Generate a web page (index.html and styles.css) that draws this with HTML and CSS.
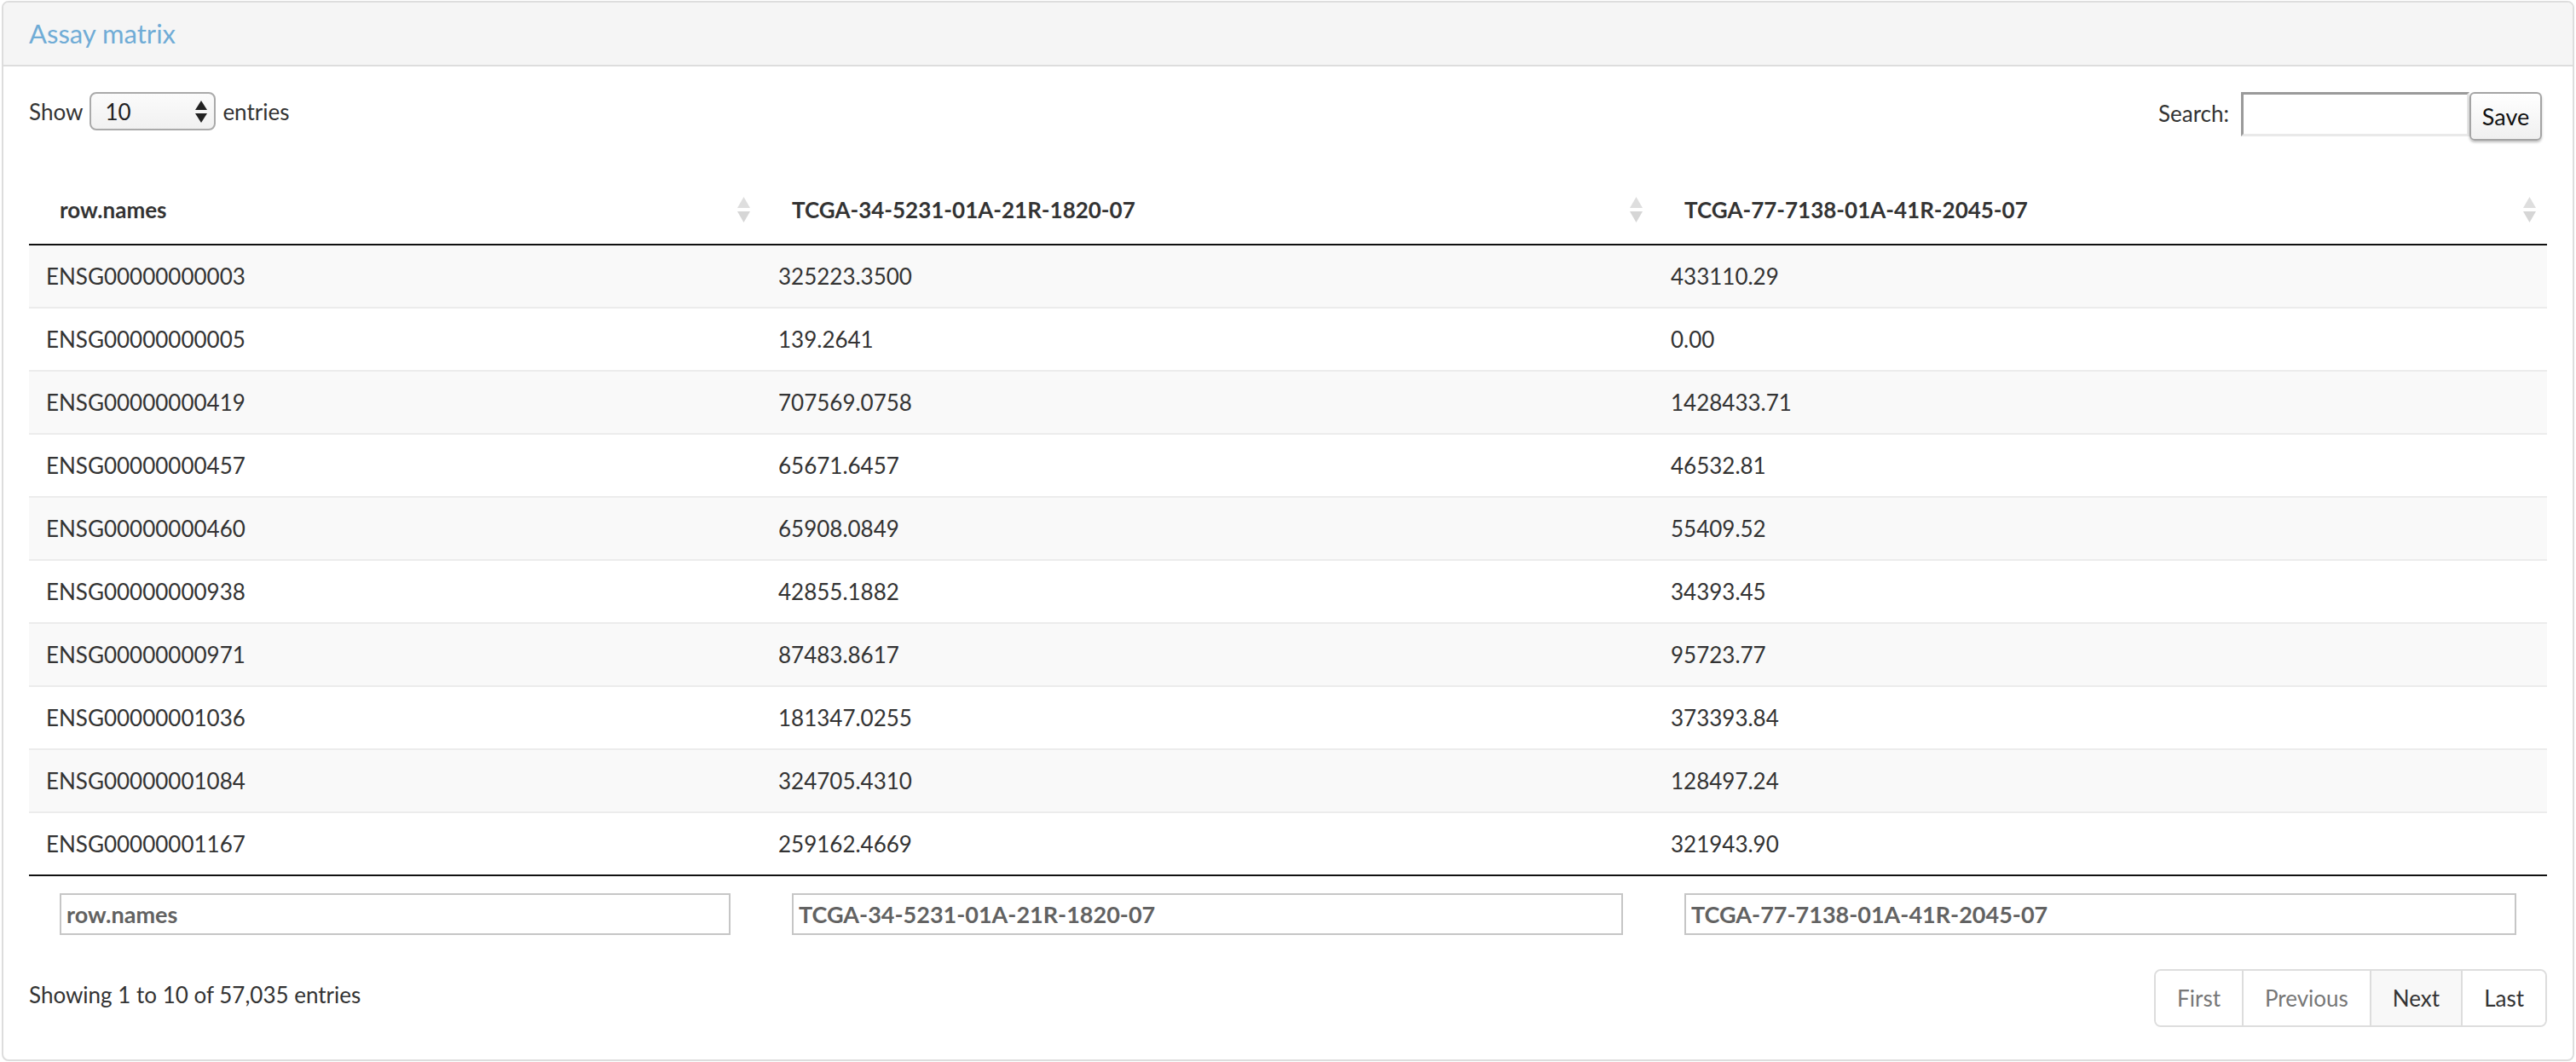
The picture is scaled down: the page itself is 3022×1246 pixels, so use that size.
FILE: index.html
```html
<!DOCTYPE html>
<html>
<head>
<meta charset="utf-8">
<title>Assay matrix</title>
<link rel="stylesheet" href="styles.css">
</head>
<body>
<div class="panel">
  <div class="panel-heading"><span class="panel-title">Assay matrix</span></div>
  <div class="panel-body">
    <div class="dt-top">
      <div class="dt-length">
        <span>Show</span>
        <div class="select"><span>10</span>
          <svg class="sel-arrows" width="14" height="26" viewBox="0 0 14 26"><polygon points="7,0 14,11 0,11" fill="#222"/><polygon points="0,15 14,15 7,26" fill="#222"/></svg>
        </div>
        <span>entries</span>
      </div>
      <div class="dt-filter">
        <span class="search-label">Search:</span>
        <input class="search-input" type="text">
        <button class="save-btn">Save</button>
      </div>
    </div>
    <table class="dt">
      <colgroup><col class="c1"><col class="c2"><col class="c3"></colgroup>
      <thead>
        <tr>
          <th>row.names<svg class="sort" width="15" height="30" viewBox="0 0 15 30"><polygon points="7.5,0 15,13 0,13" fill="#dedede"/><polygon points="0,17 15,17 7.5,30" fill="#d6d6d6"/></svg></th>
          <th>TCGA-34-5231-01A-21R-1820-07<svg class="sort" width="15" height="30" viewBox="0 0 15 30"><polygon points="7.5,0 15,13 0,13" fill="#dedede"/><polygon points="0,17 15,17 7.5,30" fill="#d6d6d6"/></svg></th>
          <th>TCGA-77-7138-01A-41R-2045-07<svg class="sort" width="15" height="30" viewBox="0 0 15 30"><polygon points="7.5,0 15,13 0,13" fill="#dedede"/><polygon points="0,17 15,17 7.5,30" fill="#d6d6d6"/></svg></th>
        </tr>
      </thead>
      <tbody>
        <tr><td>ENSG00000000003</td><td>325223.3500</td><td>433110.29</td></tr>
        <tr><td>ENSG00000000005</td><td>139.2641</td><td>0.00</td></tr>
        <tr><td>ENSG00000000419</td><td>707569.0758</td><td>1428433.71</td></tr>
        <tr><td>ENSG00000000457</td><td>65671.6457</td><td>46532.81</td></tr>
        <tr><td>ENSG00000000460</td><td>65908.0849</td><td>55409.52</td></tr>
        <tr><td>ENSG00000000938</td><td>42855.1882</td><td>34393.45</td></tr>
        <tr><td>ENSG00000000971</td><td>87483.8617</td><td>95723.77</td></tr>
        <tr><td>ENSG00000001036</td><td>181347.0255</td><td>373393.84</td></tr>
        <tr><td>ENSG00000001084</td><td>324705.4310</td><td>128497.24</td></tr>
        <tr><td>ENSG00000001167</td><td>259162.4669</td><td>321943.90</td></tr>
      </tbody>
      <tfoot>
        <tr>
          <th><input class="col-filter" type="text" placeholder="row.names"></th>
          <th><input class="col-filter" type="text" placeholder="TCGA-34-5231-01A-21R-1820-07"></th>
          <th><input class="col-filter" type="text" placeholder="TCGA-77-7138-01A-41R-2045-07"></th>
        </tr>
      </tfoot>
    </table>
    <div class="dt-bottom">
      <div class="dt-info">Showing 1 to 10 of 57,035 entries</div>
      <div class="pager">
        <span class="pg disabled">First</span>
        <span class="pg disabled">Previous</span>
        <span class="pg active-ish">Next</span>
        <span class="pg">Last</span>
      </div>
    </div>
  </div>
</div>
</body>
</html>
```
FILE: styles.css
```css
* { box-sizing: border-box; }
html, body { margin: 0; padding: 0; background: #fff; }
body {
  font-family: Lato, "Open Sans", "Liberation Sans", sans-serif;
  font-size: 26px;
  line-height: 40px;
  color: #333;
}
.panel {
  margin: 1px 2px 0 2px;
  height: 1244px;
  border: 2px solid #ddd;
  border-radius: 8px;
  overflow: hidden;
}
.panel-heading {
  height: 75px;
  background: #f5f5f5;
  border-bottom: 2px solid #ddd;
  padding: 0 30px;
  display: flex;
  align-items: center;
}
.panel-title {
  font-size: 31px;
  line-height: 36px;
  color: #70acd6;
  padding-bottom: 2px;
}
.panel-body { padding: 30px 30px 0 30px; }
.dt-top {
  display: flex;
  justify-content: space-between;
  align-items: flex-start;
  height: 57px;
  margin-bottom: 41px;
}
.dt-length {
  display: flex;
  align-items: center;
  height: 45px;
  gap: 8px;
}
.select {
  width: 148px;
  height: 45px;
  border: 2px solid #aaa;
  border-radius: 8px;
  background: linear-gradient(#fbfbfb, #f1f1f1);
  display: flex;
  align-items: center;
  justify-content: space-between;
  padding: 0 8px 0 16px;
  color: #222;
}
.dt-filter {
  display: flex;
  align-items: flex-start;
  margin-right: 6px;
}
.search-label { line-height: 50px; margin-right: 14px; }
.search-input {
  width: 268px;
  height: 52px;
  border-style: solid;
  border-width: 3px;
  border-color: #9a9a9a #e9e9e9 #e9e9e9 #9a9a9a;
  background: #fff;
  margin: 0;
}
.save-btn {
  width: 85px;
  height: 57px;
  margin: 0;
  font-family: Lato, "Open Sans", "Liberation Sans", sans-serif;
  font-size: 27px;
  color: #111;
  border: 2px solid #a4a4a4;
  border-radius: 6px;
  background: linear-gradient(#ffffff, #f0f0f0);
  box-shadow: 0 2px 3px rgba(0,0,0,0.25);
  padding: 0;
}
table.dt {
  width: 2954px;
  table-layout: fixed;
  border-collapse: collapse;
  border-spacing: 0;
}
col.c1 { width: 859px; }
col.c2 { width: 1047px; }
col.c3 { width: 1048px; }
table.dt thead th {
  position: relative;
  text-align: left;
  font-weight: 700;
  padding: 20px 36px;
  line-height: 40px;
  border-bottom: 2px solid #111;
  white-space: nowrap;
}
.sort {
  position: absolute;
  right: 13px;
  top: 25px;
}
table.dt tbody td {
  padding: 16px 20px;
  line-height: 40px;
  border-top: 2px solid #ececec;
}
table.dt tbody tr:first-child td { border-top: none; }
table.dt tbody tr:nth-child(odd) td { background: #f9f9f9; }
table.dt tfoot th {
  padding: 20px 36px;
  border-top: 2px solid #111;
  text-align: left;
}
.col-filter {
  display: block;
  width: 100%;
  height: 49px;
  border: 2px solid #c6c6c6;
  padding: 0 6px;
  margin: 0;
  font-family: Lato, "Open Sans", "Liberation Sans", sans-serif;
  font-size: 27px;
  font-weight: 700;
  color: #626262;
  background: #fff;
}
.col-filter::placeholder {
  color: #626262;
  opacity: 1;
  font-family: Lato, "Open Sans", "Liberation Sans", sans-serif;
  font-weight: 700;
}
.dt-bottom {
  display: flex;
  justify-content: space-between;
  align-items: flex-start;
  margin-top: 20px;
}
.dt-info { padding-top: 10px; }
.pager {
  display: flex;
  border: 2px solid #ddd;
  border-radius: 8px;
  overflow: hidden;
  margin-right: 0;
}
.pg {
  display: block;
  padding: 12px 25px;
  line-height: 40px;
  color: #333;
  background: #fff;
  border-left: 2px solid #ddd;
}
.pg:first-child { border-left: none; }
.pg.disabled { color: #777; }
.pg.active-ish { background: #f8f8f8; }
```
